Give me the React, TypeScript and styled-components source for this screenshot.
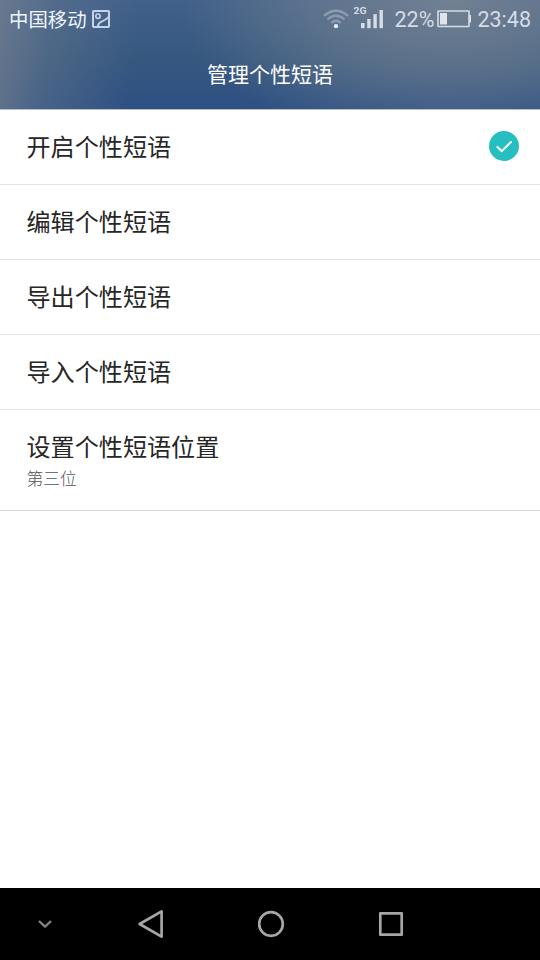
import React from "react";
import styled, { createGlobalStyle } from "styled-components";

const GlobalStyle = createGlobalStyle`
  * { box-sizing: border-box; }
  body {
    margin: 0;
    background: #fff;
    font-family: Roboto, "Noto Sans CJK SC", sans-serif;
  }
`;

const Screen = styled.div`
  display: flex;
  flex-direction: column;
  width: 540px;
  height: 960px;
  overflow: hidden;
  background: #fff;
`;

const Header = styled.header`
  flex: none;
  height: 110px;
  border-bottom: 1px solid #b4bfcd;
  background:
    radial-gradient(ellipse 270px 150px at 450px 0, rgba(130, 139, 149, 0.75), rgba(130, 139, 149, 0.45) 50%, rgba(130, 139, 149, 0)),
    linear-gradient(97deg, rgba(116, 127, 144, 0.78), rgba(112, 126, 144, 0.38) 55px, rgba(100, 122, 146, 0) 140px),
    linear-gradient(180deg, #41608a 0%, #36587f 55%, #2e5083 100%);
`;

const StatusBar = styled.div`
  display: flex;
  align-items: center;
  justify-content: space-between;
  height: 38px;
  padding: 0 9px;
`;

const StatusGroup = styled.div`
  display: flex;
  align-items: center;
  height: 38px;
`;

const Carrier = styled.span`
  margin-right: 5px;
  color: #edf5ff;
  font-family: "Noto Sans CJK SC", sans-serif;
  font-size: 19.4px;
  line-height: 38px;
`;

const StatusText = styled.span<{ $gap: number }>`
  margin-left: ${(p) => p.$gap}px;
  padding-top: 2px;
  color: #d5dce6;
  font-size: 21.5px;
  line-height: 36px;
`;

const Battery = styled.svg`
  margin-left: 3px;
`;

const TitleBar = styled.div`
  display: flex;
  align-items: center;
  justify-content: center;
  height: 70px;
`;

const Title = styled.h1`
  margin: 0;
  color: #fff;
  font-family: "Noto Sans CJK SC", sans-serif;
  font-size: 21px;
  font-weight: 400;
  line-height: 70px;
`;

const List = styled.main`
  flex: 1;
`;

const Row = styled.div<{ $height: number; $last?: boolean }>`
  display: flex;
  align-items: center;
  justify-content: space-between;
  height: ${(p) => p.$height}px;
  padding: 0 21px ${(p) => (p.$last ? 0 : 2)}px 26.5px;
  border-bottom: 1px solid ${(p) => (p.$last ? "#d6d6d6" : "#e4e4e4")};
`;

const Label = styled.div`
  color: #262626;
  font-family: "Noto Sans CJK SC", sans-serif;
  font-size: 24.1px;
  line-height: 36px;
`;

const Summary = styled.div`
  color: #545454;
  font-family: "Noto Sans CJK SC", sans-serif;
  font-size: 16.8px;
  font-weight: 300;
  line-height: 28px;
`;

const NavBar = styled.nav`
  display: grid;
  grid-template-columns: 90px 121px 120px 120px;
  flex: none;
  align-items: center;
  justify-items: center;
  height: 72px;
  background: #000;
`;

const ImageIcon = () => (
  <svg width="18" height="18" viewBox="0 0 18 18" fill="none" stroke="#c3d3e9" strokeWidth="2">
    <rect x="1" y="1" width="16" height="16" rx="0.8" />
    <circle cx="6" cy="6.2" r="2.2" strokeWidth="1.6" />
    <path d="M5.8 16.5Q6.4 12.6 10 11.4T16.5 7.2" strokeWidth="1.9" />
  </svg>
);

const WifiIcon = () => (
  <svg width="26" height="38" viewBox="323 0 26 38" fill="none" stroke="#b9c3d1" strokeWidth="2.4">
    <path d="M324 15.8Q336 5.8 348 15.8" opacity="0.5" />
    <path d="M327.6 19.3Q336 12.3 344.4 19.3" opacity="0.5" />
    <path d="M331.3 22.8Q336 18.8 340.7 22.8" opacity="0.5" />
    <circle cx="336" cy="26.2" r="2.1" fill="#edf4ff" stroke="none" />
  </svg>
);

const SignalIcon = () => (
  <svg width="34" height="38" viewBox="349 0 34 38" fill="#d5dde7">
    <text x="353.5" y="14.2" fontFamily="Roboto, sans-serif" fontSize="9.8" fontWeight="700" textLength="13" lengthAdjust="spacingAndGlyphs">2G</text>
    <rect x="361" y="23" width="3.6" height="5.2" />
    <rect x="367.2" y="19" width="3.4" height="9.2" />
    <rect x="373.4" y="14.2" width="3.4" height="14" />
    <rect x="379.5" y="10" width="3.4" height="18.2" />
  </svg>
);

const BatteryIcon = () => (
  <Battery width="34" height="38" viewBox="437 0 34 38" fill="none" stroke="#d5dde7">
    <rect x="438" y="11" width="31" height="15.5" rx="0.5" strokeWidth="1.6" />
    <rect x="440" y="13" width="7" height="11.5" fill="#dfe4eb" stroke="none" />
    <path d="M470 15V22.5" strokeWidth="2.2" />
  </Battery>
);

const CheckBadge = () => (
  <svg width="30" height="30" viewBox="0 0 30 30" fill="none">
    <circle cx="15" cy="15" r="15" fill="#26bfc1" />
    <path d="M8.4 16L12.7 20.2L22 11" stroke="#fff" strokeWidth="2" strokeLinecap="round" />
  </svg>
);

const NavIcon = styled.svg`
  fill: none;
  stroke: #a6a6a6;
  stroke-width: 2.7;
  stroke-linejoin: round;
`;

const items = ["开启个性短语", "编辑个性短语", "导出个性短语", "导入个性短语"];

export default function App() {
  return (
    <Screen>
      <GlobalStyle />
      <Header>
        <StatusBar>
          <StatusGroup>
            <Carrier>中国移动</Carrier>
            <ImageIcon />
          </StatusGroup>
          <StatusGroup>
            <WifiIcon />
            <SignalIcon />
            <StatusText $gap={12}>22%</StatusText>
            <BatteryIcon />
            <StatusText $gap={6}>23:48</StatusText>
          </StatusGroup>
        </StatusBar>
        <TitleBar>
          <Title>管理个性短语</Title>
        </TitleBar>
      </Header>
      <List>
        {items.map((item, i) => (
          <Row key={item} $height={75}>
            <Label>{item}</Label>
            {i === 0 && <CheckBadge />}
          </Row>
        ))}
        <Row $height={101} $last>
          <div>
            <Label>设置个性短语位置</Label>
            <Summary>第三位</Summary>
          </div>
        </Row>
      </List>
      <NavBar>
        <NavIcon width="14" height="10" viewBox="0 0 14 10">
          <path d="M1 2L7 7.6L13 2" strokeWidth="2.3" stroke="#858585" />
        </NavIcon>
        <NavIcon width="26" height="30" viewBox="0 0 26 30">
          <path d="M23.6 2.3V27.7L1.6 15Z" />
        </NavIcon>
        <NavIcon width="28" height="28" viewBox="0 0 28 28">
          <circle cx="14" cy="14" r="11.8" />
        </NavIcon>
        <NavIcon width="26" height="26" viewBox="0 0 26 26">
          <rect x="2.3" y="2.3" width="21.4" height="21.4" />
        </NavIcon>
      </NavBar>
    </Screen>
  );
}
